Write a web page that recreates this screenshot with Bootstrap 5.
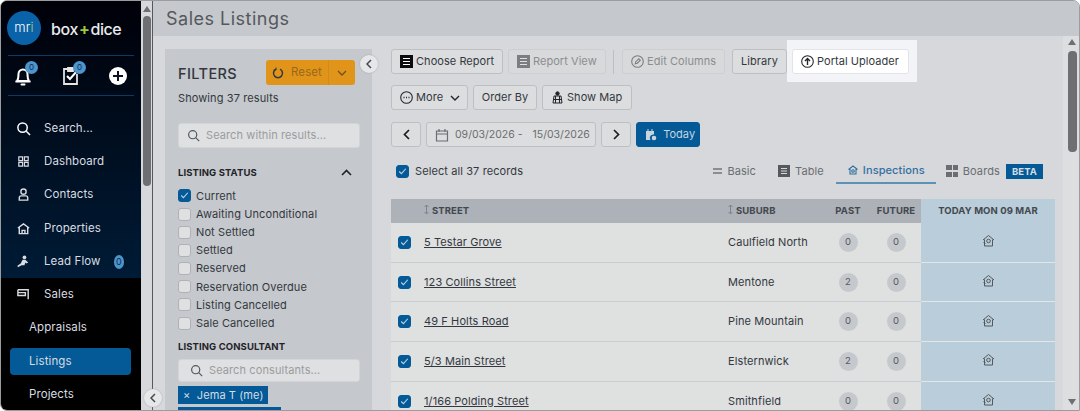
<!DOCTYPE html>
<html lang="en">
<head>
<meta charset="UTF-8">
<title>Sales Listings</title>
<link rel="stylesheet" href="https://cdn.jsdelivr.net/npm/bootstrap@5.3.0/dist/css/bootstrap.min.css">
<style>
html, body { height: 411px; overflow: hidden; background: #fff; }
body { font-family: Inter, "Noto Sans", sans-serif; font-size: 11px; color: #33383f; letter-spacing: .1px; }
.frame { position: relative; width: 1080px; height: 411px; border: 1px solid #9a9c9e; border-radius: 7px 7px 0 7px; overflow: hidden; background: #d6d8db; }

/* sidebar */
.side { width: 140px; flex: none; background: #000; color: #d9dce0; }
.side-top { height: 277px; padding: 0 7px; background: linear-gradient(#000008, #001b36); }
.brand { height: 54px; gap: 10px; margin-left: -1px; }
.brand-disc { width: 34px; height: 34px; border-radius: 50%; background: #0a62a8; color: #fff; font-size: 13px; font-weight: 300; text-align: center; line-height: 33px; }
.brand-disc i { font-style: normal; color: #a5d16a; }
.brand-word { font-size: 16px; font-weight: 500; color: #e8eaec; letter-spacing: -.4px; margin-top: 1px; }
.brand-word b { color: #9acb3c; font-weight: 700; padding: 0 1px; }
.quick { height: 41px; border-top: 1px solid #0c3a63; border-bottom: 1px solid #0c3a63; padding: 0 6px 0 4px; }
.quick-icon { position: relative; display: block; width: 22px; height: 22px; }
.bubble { position: absolute; top: -4px; right: -4px; width: 13px; height: 13px; border-radius: 50%; background: #4d93cc; color: #0f2c48; font-size: 8px; line-height: 13px; text-align: center; letter-spacing: 0; }
.side-link { height: 33.4px; padding-left: 8px; gap: 13px; color: #d9dce0; text-decoration: none; font-size: 11.5px; white-space: nowrap; }
.side-link svg { width: 15px; height: 15px; flex: none; }
.side-first { margin-top: 15.5px; }
.side-sales { padding: 0 7px; }
.side-sub { display: block; height: 27px; line-height: 27px; margin: 3px 3px 6.4px 2px; padding-left: 19px; border-radius: 4px; color: #d9dce0; text-decoration: none; font-size: 11.5px; }
.side-sub.on { background: #045a96; }
.count-dot { width: 14px; height: 14px; margin-left: auto; margin-right: 10px; border-radius: 50%; background: #4d93cc; color: #0f2c48; font-size: 9px; line-height: 14px; text-align: center; }

/* scrollbars */
.scroll-rail { flex: none; background: #d6d8db; position: relative; }
.rail-left { width: 12px; border-right: 1px solid #55585c; }
.rail-right { width: 16px; margin-left: 6px; background: #dcdee0; }
.thumb { position: absolute; background: #6d6f72; border-radius: 4px; }
.rail-left .thumb { left: 2px; top: 15px; width: 8px; height: 170px; }
.rail-right .thumb { left: 5px; top: 15px; width: 9px; height: 101px; }
.arrow-up, .arrow-down { position: absolute; width: 0; height: 0; border-left: 4px solid transparent; border-right: 4px solid transparent; }
.arrow-up { border-bottom: 6px solid #6d6f72; }
.arrow-down { border-top: 6px solid #6d6f72; }
.rail-left .arrow-up { left: 2px; top: 5px; }
.rail-right .arrow-up { left: 5px; top: 3px; }
.rail-right .arrow-down { left: 5px; bottom: 5px; }

/* content */
.content-col { min-width: 0; }
.page-head { height: 36px; background: #c5c8cc; padding-left: 13px; font-size: 18px; color: #55585c; letter-spacing: .5px; line-height: 35px; }
.page-body { padding-left: 12px; min-height: 0; }
.filters { width: 207px; flex: none; margin-top: 13px; background: #c5c8cc; padding: 11px 12px 0 13px; }
.filters-title { font-size: 14.5px; font-weight: 500; letter-spacing: .4px; color: #33383f; margin-top: 2px; }
.split-reset { width: 89px; height: 25px; margin-left: auto; margin-right: 5px; background: #e0951a; border-radius: 3px; color: #98691c; font-size: 11.5px; }
.split-reset span { flex: 1; height: 100%; gap: 7px; border-right: 1px solid #d18b18; }
.split-reset svg { flex: none; }
.split-reset .caret-part { flex: none; width: 26px; border: 0; }
.result-note { margin-top: 5px; font-size: 11px; }
.find { height: 25px; gap: 6px; padding-left: 8px; margin-top: 16px; background: #dfe0e1; border: 1px solid #d2d4d6; border-radius: 3px; color: #9a9c9f; font-size: 11px; }
.find-people { height: 23px; margin-top: 4px; padding-left: 11px; }
.status-head { margin-top: 18px; }
.status-list { margin-top: 7px; }
.group-title { font-size: 9.5px; font-weight: 700; color: #1f2328; letter-spacing: .1px; }
.consultant-title { margin-top: 8px; }
.tick-row { height: 18.2px; gap: 5px; font-size: 11px; }
.form-check-input.tick { width: 13px; height: 13px; margin: 0; flex: none; background-color: #dfe0e1; border: 1px solid #aeb1b5; border-radius: 3px; }
.form-check-input.tick:checked { background-color: #045a96; border-color: #045a96; background-image: url("data:image/svg+xml,%3csvg xmlns='http://www.w3.org/2000/svg' viewBox='0 0 20 20'%3e%3cpath fill='none' stroke='%23b9d2e4' stroke-width='2' d='m4 10 4 4 8-9'/%3e%3c/svg%3e"); }
.tick-all { margin: 0 6px 0 5px !important; }
.tick-cell { margin-left: 7px !important; }
.chip { height: 18px; width: 90px; background: #045a96; color: #d5dde5; padding: 0 5px; line-height: 18px; font-size: 11px; white-space: nowrap; }
.chip-stub { width: 103px; height: 14px; margin-top: 3px; background: #045a96; }
.main-col { min-width: 0; flex: 1; padding: 13px 0 0 19px; }
.tool-row { gap: 5px; }
.tool-row + .tool-row { margin-top: 11px; }
.tool-row.date-row { margin-top: 12px; }
.btn.tool { height: 25px; padding: 0 0 0 8px; gap: 3px; display: inline-flex; align-items: center; flex: none; font-size: 11px; color: #33383f; background: #dcddde; border: 1px solid #bdbfc2; border-radius: 3px; letter-spacing: .05px; white-space: nowrap; }
.btn.tool:disabled { opacity: 1; color: #8b8d90; background: #d8d9da; border-color: #cdced0; }
.btn.tool-blue { background: #045a96; border-color: #045a96; color: #c5d4e0; }
.btn.tool-mid { padding: 0; justify-content: center; }
.wd-choose { width: 112px; } .wd-view { width: 98px; } .wd-edit { width: 103px; }
.wd-lib { width: 55px; margin-left: 2px; } .wd-portal { width: 117px; }
.wd-more { width: 77px; } .wd-order { width: 64px; } .wd-map { width: 90px; }
.wd-step { width: 30px; } .wd-today { width: 64px; }
.btn.tool.wd-date { width: 170px; color: #6a6d71; gap: 5px; font-size: 10.5px; letter-spacing: 0; }
.date-from { margin-left: 1px; }
.date-to { margin-left: 5px; }
.tool-sep { width: 1px; height: 24px; background: #bdbfc2; margin: 0 3px 0 2px; }
.lit-wrap { position: relative; margin: -9px -8px -8px -5px; padding: 9px 8px 8px 5px; background: #f2f4f7; }
.btn.tool.tool-lit { background: #fff; color: #33383f; border-color: #e2e4e7; }
.view-bar { height: 26px; margin-top: 10px; width: 664px; padding-top: 2px; }
.view-tabs { margin-right: 12px; }
.view-tab { height: 25px; gap: 5px; padding: 0 12px 0 10px; color: #6a6d71; font-size: 11px; }
.view-tab.on { color: #33709f; border-bottom: 2px solid #5d91b6; font-weight: 500; padding: 0 11px 0 11px; gap: 4px; }
.view-tab.last-tab { padding-right: 0; }
.beta-tag { height: 15px; padding: 0 6px; margin-left: 1px; background: #045a96; color: #d5dde5; font-size: 9.5px; font-weight: 700; line-height: 15px; }

/* table */
.table.listing { width: 664px; margin: 16px 0 0; table-layout: fixed; border-collapse: separate; border-spacing: 0; --bs-table-bg: transparent; }
.c-chk { width: 33px; } .c-street { width: 304px; } .c-suburb { width: 102px; } .c-past { width: 36px; } .c-future { width: 55px; }
.listing th { height: 24px; padding: 0; background: #adb1b8; color: #44484e; border: 0; font-size: 9.5px; font-weight: 700; vertical-align: middle; letter-spacing: .1px; }
.listing td { height: 39.7px; padding: 0; background: #dfe0e0; border: 0; border-bottom: 1px solid #c9ccd0; color: #33383f; font-size: 11px; vertical-align: middle; }
.listing th.today-col { background: #b9cdda; text-align: center; }
.listing td.today-col { background: #b9cdda; text-align: center; border-bottom: 1px solid #e3e5e6; }
.listing td.today-col svg { display: block; margin: 0 auto 3px; }
.listing a { color: #33383f; }
.listing .mid { text-align: center; }
.listing .fut { padding-left: 5px; }
.sort-mark { margin-right: 3px; vertical-align: -1px; }
.num-dot { display: inline-block; width: 19px; height: 19px; border-radius: 50%; background: #c5c8cc; color: #55585c; text-align: center; line-height: 18px; font-size: 9.5px; }

/* round collapse buttons */
.fold-btn { position: absolute; width: 18px; height: 18px; border-radius: 50%; background: #e6e7e8; box-shadow: 0 0 2px #a6a8ab; z-index: 3; display: flex; align-items: center; justify-content: center; }
.fold-one { left: 143px; top: 388px; }
.fold-two { left: 359px; top: 54px; }
</style>
</head>
<body>
<div class="frame d-flex">

  <div class="side d-flex flex-column">
    <div class="side-top">
      <div class="brand d-flex align-items-center">
        <div class="brand-disc">m<span>r</span><i>i</i></div>
        <div class="brand-word">box<b>+</b>dice</div>
      </div>
      <div class="quick d-flex align-items-center justify-content-between">
        <span class="quick-icon">
          <svg width="22" height="22" viewBox="0 0 22 22" fill="none" stroke="#fff" stroke-width="2"><path d="M5 16c1.500-2 1.500-4 1.500-7a4.500 4.500 0 0 1 9 0c0 3 0 5 1.500 7zM3.500 16.500h15"/><path d="M9.500 19.500h3" stroke-linecap="round"/></svg>
          <span class="bubble">0</span>
        </span>
        <span class="quick-icon">
          <svg width="22" height="22" viewBox="0 0 22 22" fill="none" stroke="#e8e4e4" stroke-width="1.800"><path d="M8 4H4v15h13V9"/><path d="M8 3h5v3H8z" fill="#e8e4e4"/><path d="m7 11 3 3 7-8" stroke="#fff" stroke-width="2"/></svg>
          <span class="bubble">0</span>
        </span>
        <svg width="20" height="20" viewBox="0 0 20 20"><circle cx="10" cy="10" r="9" fill="#fff"/><path d="M10 5v10M5 10h10" stroke="#0a1420" stroke-width="2"/></svg>
      </div>
      <a class="side-link side-first d-flex align-items-center" href="#">
        <svg viewBox="0 0 16 16" fill="none" stroke="#fff" stroke-width="1.600"><circle cx="7" cy="7" r="5"/><path d="m11 11 4 4"/></svg>Search...
      </a>
      <a class="side-link d-flex align-items-center" href="#">
        <svg viewBox="0 0 16 16" fill="none" stroke="#d9dce0" stroke-width="1.300"><path d="M3 3h4v4H3zM9 3h4v4H9zM3 9h4v4H3zM9 9h4v4H9z"/></svg>Dashboard
      </a>
      <a class="side-link d-flex align-items-center" href="#">
        <svg viewBox="0 0 16 16" fill="none" stroke="#d9dce0" stroke-width="1.500"><circle cx="8" cy="5" r="2.800"/><path d="M3.500 14v-2.500c0-1 1-2 2-2h5c1 0 2 1 2 2V14z"/></svg>Contacts
      </a>
      <a class="side-link d-flex align-items-center" href="#">
        <svg viewBox="0 0 16 16" fill="none" stroke="#d9dce0" stroke-width="1.500"><path d="M2 7.500 8 3l6 4.500M3.500 7v6.500h9V7M6.500 13.500V10h3v3.500"/></svg>Properties
      </a>
      <a class="side-link d-flex align-items-center" href="#">
        <svg viewBox="0 0 16 16" fill="#d9dce0"><circle cx="9" cy="3.500" r="2"/><path d="M7 6h3l3 3-2 1-1-1-1 3H6L2 14l-.500-1.500L5 10z"/></svg>Lead Flow<span class="count-dot">0</span>
      </a>
    </div>
    <div class="side-sales">
      <a class="side-link d-flex align-items-center" href="#">
        <svg viewBox="0 0 16 16" fill="none" stroke="#d9dce0" stroke-width="1.500"><path d="M2 3h11v10M2 3v6h8V6H2"/></svg>Sales
      </a>
      <a class="side-sub" href="#">Appraisals</a>
      <a class="side-sub on" href="#">Listings</a>
      <a class="side-sub" href="#">Projects</a>
    </div>
  </div>

  <div class="scroll-rail rail-left"><span class="arrow-up"></span><span class="thumb"></span></div>

  <div class="content-col flex-grow-1 d-flex flex-column">
    <div class="page-head">Sales Listings</div>
    <div class="page-body d-flex flex-grow-1">

      <div class="filters">
        <div class="d-flex align-items-center">
          <span class="filters-title">FILTERS</span>
          <div class="split-reset d-flex align-items-center">
            <span class="d-flex align-items-center justify-content-center">
              <svg width="12" height="12" viewBox="0 0 12 12" fill="none" stroke="#33383f" stroke-width="1.500"><path d="M4 2.200A4.500 4.500 0 1 0 8 2.200"/><path d="M4 .5v2.500H1.500" stroke-width="1"/></svg>Reset
            </span>
            <span class="caret-part d-flex align-items-center justify-content-center">
              <svg width="10" height="6" viewBox="0 0 10 6" fill="none" stroke="#6f5020" stroke-width="1.300"><path d="m1 1 4 4 4-4"/></svg>
            </span>
          </div>
        </div>
        <div class="result-note">Showing 37 results</div>
        <div class="find d-flex align-items-center">
          <svg width="13" height="13" viewBox="0 0 16 16" fill="none" stroke="#55585c" stroke-width="1.500"><circle cx="7" cy="7" r="5"/><path d="m11 11 4 4"/></svg>Search within results...
        </div>
        <div class="status-head d-flex justify-content-between align-items-center">
          <span class="group-title">LISTING STATUS</span>
          <svg class="me-2" width="11" height="7" viewBox="0 0 11 7" fill="none" stroke="#1f2328" stroke-width="1.600"><path d="m1 6 4.500-4.500L10 6"/></svg>
        </div>
        <div class="status-list">
          <div class="tick-row d-flex align-items-center"><input class="form-check-input tick" type="checkbox" checked>Current</div>
          <div class="tick-row d-flex align-items-center"><input class="form-check-input tick" type="checkbox">Awaiting Unconditional</div>
          <div class="tick-row d-flex align-items-center"><input class="form-check-input tick" type="checkbox">Not Settled</div>
          <div class="tick-row d-flex align-items-center"><input class="form-check-input tick" type="checkbox">Settled</div>
          <div class="tick-row d-flex align-items-center"><input class="form-check-input tick" type="checkbox">Reserved</div>
          <div class="tick-row d-flex align-items-center"><input class="form-check-input tick" type="checkbox">Reservation Overdue</div>
          <div class="tick-row d-flex align-items-center"><input class="form-check-input tick" type="checkbox">Listing Cancelled</div>
          <div class="tick-row d-flex align-items-center"><input class="form-check-input tick" type="checkbox">Sale Cancelled</div>
        </div>
        <div class="group-title consultant-title">LISTING CONSULTANT</div>
        <div class="find find-people d-flex align-items-center">
          <svg width="13" height="13" viewBox="0 0 16 16" fill="none" stroke="#55585c" stroke-width="1.500"><circle cx="7" cy="7" r="5"/><path d="m11 11 4 4"/></svg>Search consultants...
        </div>
        <div class="chip mt-1">× &nbsp;Jema T (me)</div>
        <div class="chip-stub"></div>
      </div>

      <div class="main-col">
        <div class="tool-row d-flex align-items-center">
          <button class="btn tool wd-choose" type="button">
            <svg width="13" height="13" viewBox="0 0 13 13"><path d="M0 0h13v13H0z" fill="#0c0c0e"/><path d="M3 3.500h7M3 6.500h7M3 9.500h7" stroke="#fff" stroke-width="1"/></svg>Choose Report</button>
          <button class="btn tool wd-view" type="button" disabled>
            <svg width="13" height="13" viewBox="0 0 13 13"><path d="M0 0h13v13H0z" fill="#7b7d80"/><path d="M3 3.500h7M3 6.500h7M3 9.500h7" stroke="#e0e0e0" stroke-width="1"/></svg>Report View</button>
          <span class="tool-sep"></span>
          <button class="btn tool wd-edit" type="button" disabled>
            <svg width="13" height="13" viewBox="0 0 13 13" fill="none" stroke="#7b7d80" stroke-width="1.100"><circle cx="6.500" cy="6.500" r="5.800"/><path d="m4.300 8.700.5-2 3-3 1.500 1.500-3 3z"/></svg>Edit Columns</button>
          <button class="btn tool tool-mid wd-lib" type="button">Library</button>
          <span class="lit-wrap">
            <button class="btn tool tool-lit wd-portal" type="button">
              <svg width="13" height="13" viewBox="0 0 13 13" fill="none" stroke="#22262b" stroke-width="1.100"><circle cx="6.500" cy="6.500" r="5.800"/><path d="M6.500 10V3.500M4 6l2.500-2.500L9 6" stroke-width="1.400"/></svg>Portal Uploader</button>
          </span>
        </div>
        <div class="tool-row d-flex">
          <button class="btn tool wd-more" type="button">
            <svg width="13" height="13" viewBox="0 0 13 13" fill="none" stroke="#22262b" stroke-width="1.100"><circle cx="6.500" cy="6.500" r="5.800"/><path d="M3.500 6.500h1M6 6.500h1M8.500 6.500h1" stroke-width="1.300"/></svg>More
            <svg class="ms-1" width="10" height="6" viewBox="0 0 10 6" fill="none" stroke="#22262b" stroke-width="1.400"><path d="m1 1 4 4 4-4"/></svg></button>
          <button class="btn tool tool-mid wd-order" type="button">Order By</button>
          <button class="btn tool wd-map" type="button">
            <svg width="13" height="13" viewBox="0 0 13 13" fill="none" stroke="#22262b" stroke-width="1"><path d="M2 12 3 5h7l1 7zM4.500 5v7M8.500 5v7M2.500 8.500h8"/><circle cx="6.500" cy="2.500" r="1.700" fill="#22262b"/></svg>Show Map</button>
        </div>
        <div class="tool-row date-row d-flex">
          <button class="btn tool tool-mid wd-step" type="button"><svg width="7" height="11" viewBox="0 0 7 11" fill="none" stroke="#1a1e23" stroke-width="1.700"><path d="M6 1 1.500 5.500 6 10"/></svg></button>
          <button class="btn tool wd-date" type="button">
            <svg width="14" height="14" viewBox="0 0 14 14" fill="none" stroke="#6a6d71" stroke-width="1.200"><path d="M1.500 3h11v10h-11zM1.500 6h11M4 1v3M10 1v3"/></svg>
            <span class="date-from">09/03/2026 -</span><span class="date-to">15/03/2026</span></button>
          <button class="btn tool tool-mid wd-step" type="button"><svg width="7" height="11" viewBox="0 0 7 11" fill="none" stroke="#1a1e23" stroke-width="1.700"><path d="m1 1 4.500 4.500L1 10"/></svg></button>
          <button class="btn tool tool-blue wd-today" type="button">
            <svg width="12" height="12" viewBox="0 0 12 12" fill="#c5d4e0"><path d="M1 2h8v3.500A3.500 3.500 0 0 0 5.500 11H1zM2.500 0h1v2h-1zM6.500 0h1v2h-1z"/><circle cx="9" cy="9" r="2.300"/></svg>&nbsp;Today</button>
        </div>
        <div class="view-bar d-flex align-items-center">
          <input class="form-check-input tick tick-all" type="checkbox" checked>Select all 37 records
          <div class="view-tabs d-flex align-items-center ms-auto">
            <span class="view-tab d-flex align-items-center"><svg width="9" height="6" viewBox="0 0 9 6" fill="#8b8d90"><path d="M0 0h9v2H0zM0 4h9v2H0z"/></svg>Basic</span>
            <span class="view-tab d-flex align-items-center"><svg width="12" height="12" viewBox="0 0 12 12"><path d="M0 0h12v12H0z" fill="#55585c"/><path d="M3 3.500h6M3 6h6M3 8.500h6" stroke="#d6d8db"/></svg>Table</span>
            <span class="view-tab on d-flex align-items-center"><svg width="12" height="12" viewBox="0 0 12 12" fill="none" stroke="#33709f" stroke-width="1.100"><path d="M1.500 5.500 6 2l4.500 3.500M3 5v5h6V5"/><circle cx="6" cy="7" r="1.300"/></svg>Inspections</span>
            <span class="view-tab last-tab d-flex align-items-center"><svg width="12" height="12" viewBox="0 0 12 12" fill="#6a6d71"><path d="M0 0h12v5H0zM0 7h12v5H0z"/><path d="M6 0h1v12H6z" fill="#d6d8db"/></svg>Boards<span class="beta-tag">BETA</span></span>
          </div>
        </div>
        <table class="table listing">
          <colgroup><col class="c-chk"><col class="c-street"><col class="c-suburb"><col class="c-past"><col class="c-future"><col></colgroup>
          <thead>
            <tr>
              <th></th>
              <th><svg class="sort-mark" width="5" height="11" viewBox="0 0 5 11" fill="none" stroke="#80848a"><path d="M2.500 1v9M.5 3l2-2 2 2M.5 8l2 2 2-2"/></svg>STREET</th>
              <th><svg class="sort-mark" width="5" height="11" viewBox="0 0 5 11" fill="none" stroke="#80848a"><path d="M2.500 1v9M.5 3l2-2 2 2M.5 8l2 2 2-2"/></svg>SUBURB</th>
              <th class="mid">PAST</th><th class="mid fut">FUTURE</th><th class="today-col">TODAY MON 09 MAR</th>
            </tr>
          </thead>
          <tbody id="listing-rows"></tbody>
        </table>
      </div>

      <div class="scroll-rail rail-right"><span class="arrow-up"></span><span class="thumb"></span><span class="arrow-down"></span></div>
    </div>
  </div>

  <div class="fold-btn fold-one"><svg width="6" height="10" viewBox="0 0 6 10" fill="none" stroke="#44484e" stroke-width="1.500"><path d="M5 1 1 5l4 4"/></svg></div>
  <div class="fold-btn fold-two"><svg width="6" height="10" viewBox="0 0 6 10" fill="none" stroke="#44484e" stroke-width="1.500"><path d="M5 1 1 5l4 4"/></svg></div>
</div>

<script>
  // rows are the same shape, only the address and counts change
  const listings = [
    ["5 Testar Grove", "Caulfield North", 0, 0],
    ["123 Collins Street", "Mentone", 2, 0],
    ["49 F Holts Road", "Pine Mountain", 0, 0],
    ["5/3 Main Street", "Elsternwick", 2, 0],
    ["1/166 Polding Street", "Smithfield", 0, 0]
  ];
  const houseIcon = '<svg width="13" height="13" viewBox="0 0 13 13" fill="none" stroke="#55585c" stroke-width="1"><path d="M1 6 6.500 1.500 12 6M2.500 5.500V12h8V5.500"/><circle cx="6.500" cy="7" r="1.800"/><path d="m1.500 8 2 2"/></svg>';
  document.getElementById("listing-rows").innerHTML = listings.map(row => `
    <tr>
      <td><input class="form-check-input tick tick-cell d-block" type="checkbox" checked></td>
      <td><a href="#">${row[0]}</a></td>
      <td>${row[1]}</td>
      <td class="mid"><span class="num-dot">${row[2]}</span></td>
      <td class="mid fut"><span class="num-dot">${row[3]}</span></td>
      <td class="today-col">${houseIcon}</td>
    </tr>`).join("");
</script>
<script src="https://cdn.jsdelivr.net/npm/bootstrap@5.3.0/dist/js/bootstrap.bundle.min.js"></script>
</body>
</html>
